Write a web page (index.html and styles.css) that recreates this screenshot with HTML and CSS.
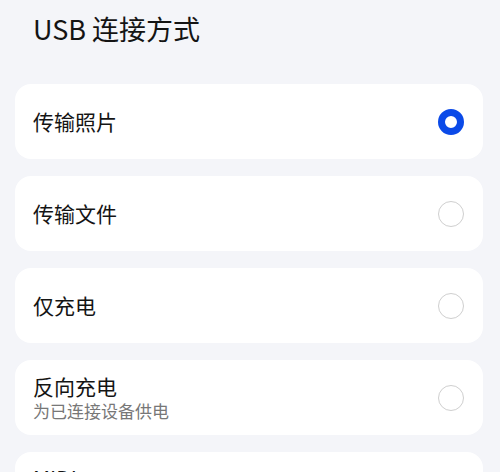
FILE: index.html
```html
<!DOCTYPE html>
<html lang="zh-CN">

<head>
    <meta charset="UTF-8">
    <meta name="viewport" content="width=device-width, initial-scale=1.0">
    <title>USB 连接方式</title>
    <link rel="stylesheet" href="styles.css">
</head>

<body>
    <h1 class="title">USB 连接方式</h1>

    <div class="options">
        <div class="option">
            <div class="label">
                <div class="name">传输照片</div>
            </div>
            <span class="radio checked"></span>
        </div>
        <div class="option">
            <div class="label">
                <div class="name">传输文件</div>
            </div>
            <span class="radio"></span>
        </div>
        <div class="option">
            <div class="label">
                <div class="name">仅充电</div>
            </div>
            <span class="radio"></span>
        </div>
        <div class="option">
            <div class="label">
                <div class="name">反向充电</div>
                <div class="desc">为已连接设备供电</div>
            </div>
            <span class="radio"></span>
        </div>
        <div class="option">
            <div class="label">
                <div class="name">MIDI</div>
                <div class="desc">将设备用作 MIDI 输入设备</div>
            </div>
            <span class="radio"></span>
        </div>
    </div>
</body>

</html>
```

FILE: styles.css
```css
body {
    margin: 0;
    background-color: #f4f5f9;
    font-family: "Noto Sans CJK SC", "Noto Sans", sans-serif;
    color: #141414;
    overflow: hidden;
}

.title {
    margin: 0;
    padding: 10px 0 0 33px;
    height: 73px;
    box-sizing: border-box;
    font-size: 27px;
    font-weight: 400;
    line-height: 38px;
}

.options {
    display: flex;
    flex-direction: column;
    gap: 17px;
    margin: 11px 17px 0 15px;
}

.option {
    display: flex;
    align-items: center;
    justify-content: space-between;
    min-height: 75px;
    padding: 0 19px 0 18px;
    box-sizing: border-box;
    background-color: #ffffff;
    border-radius: 16px;
}

.name {
    font-size: 21px;
    line-height: 27px;
    font-weight: 400;
}

.desc {
    font-size: 17px;
    line-height: 22px;
    color: #777777;
}

.radio {
    width: 26px;
    height: 26px;
    box-sizing: border-box;
    border: 1.5px solid #cfcfcf;
    border-radius: 50%;
}

.radio.checked {
    border: 7.5px solid #0b4ae8;
}
```
